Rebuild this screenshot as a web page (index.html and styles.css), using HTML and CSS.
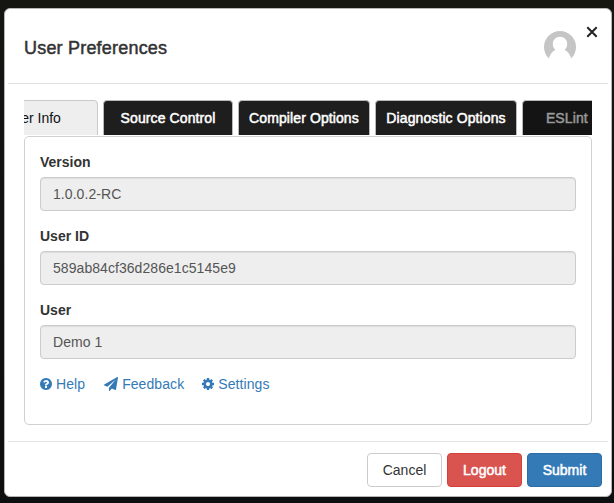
FILE: index.html
```html
<!DOCTYPE html>
<html lang="en">
<head>
<meta charset="utf-8">
<title>User Preferences</title>
<link rel="stylesheet" href="styles.css">
</head>
<body>
<div class="modal">
  <header class="modal-header">
    <h1 class="title">User Preferences</h1>
    <svg class="avatar" viewBox="0 0 32 32"><defs><clipPath id="round"><circle cx="16" cy="16" r="16"/></clipPath></defs><path clip-path="url(#round)" fill="#c5c5c5" d="M0 0h32v32H0z"/><circle cx="16" cy="13" r="7.300" fill="#fff"/><path fill="#fff" d="M11 19C7.500 21 6 24 4.500 28L3 33h26l-1.500-5C26 24 24.500 21 21 19z"/></svg>
    <button class="close" aria-label="Close"><svg viewBox="0 0 12 12"><path d="M1.300 1.300l9.400 9.400M10.700 1.300l-9.400 9.400"/></svg></button>
  </header>
  <main class="modal-body">
    <nav class="tabs">
      <a class="tab active">User Info</a>
      <a class="tab source">Source Control</a>
      <a class="tab compiler">Compiler Options</a>
      <a class="tab diagnostic">Diagnostic Options</a>
      <a class="tab disabled">ESLint Rules</a>
    </nav>
    <section class="panel">
      <label class="label">Version</label>
      <div class="field">1.0.0.2-RC</div>
      <label class="label">User ID</label>
      <div class="field">589ab84cf36d286e1c5145e9</div>
      <label class="label">User</label>
      <div class="field">Demo 1</div>
      <div class="links">
        <a class="link help"><svg viewBox="128 128 1536 1536"><path d="M1024 1376v-192q0-14-9-23t-23-9h-192q-14 0-23 9t-9 23v192q0 14 9 23t23 9h192q14 0 23-9t9-23zm256-672q0-88-55.500-163t-138.500-116-170-41q-243 0-371 213-15 24 8 42l132 100q7 6 19 6 16 0 25-12 53-68 86-92 34-24 86-24 48 0 85.500 26t37.500 59q0 38-20 61t-68 45q-63 28-115.500 86.500t-52.500 125.500v36q0 14 9 23t23 9h192q14 0 23-9t9-23q0-19 21.500-49.500t54.500-49.500q32-18 49-28.500t46-35 44.500-48 28-60.500 12.500-81zm384 192q0 209-103 385.500t-279.500 279.500-385.500 103-385.500-103-279.500-279.500-103-385.500 103-385.500 279.500-279.500 385.500-103 385.500 103 279.500 279.500 103 385.500z"/></svg><span>Help</span></a>
        <a class="link feedback"><svg viewBox="0 0 1792 1792"><path d="M1764 11q33 24 27 64l-256 1536q-5 29-32 45-14 8-31 8-11 0-24-5l-453-185-242 295q-18 23-49 23-13 0-22-4-19-7-30.500-23.500t-11.500-36.500v-349l864-1059-1069 925-395-162q-37-14-40-55-2-40 32-59l1664-960q15-9 32-9 20 0 36 11z"/></svg><span>Feedback</span></a>
        <a class="link settings"><svg viewBox="128 128 1536 1536"><path d="M1152 896q0-106-75-181t-181-75-181 75-75 181 75 181 181 75 181-75 75-181zm512-109v222q0 12-8 23t-20 13l-185 28q-19 54-39 91 35 50 107 138 10 12 10 25t-9 23q-27 37-99 108t-94 71q-12 0-26-9l-138-108q-44 23-91 38-16 136-29 186-7 28-36 28h-222q-14 0-24.500-8.500t-11.500-21.500l-28-184q-49-16-90-37l-141 107q-10 9-25 9-14 0-25-11-126-114-165-168-7-10-7-23 0-12 8-23 15-21 51-66.500t54-70.500q-27-50-41-99l-183-27q-13-2-21-12.500t-8-23.500v-222q0-12 8-23t19-13l186-28q14-46 39-92-40-57-107-138-10-12-10-24 0-10 9-23 26-36 98.500-107.500t94.500-71.500q13 0 26 10l138 107q44-23 91-38 16-136 29-186 7-28 36-28h222q14 0 24.500 8.500t11.500 21.500l28 184q49 16 90 37l142-107q9-9 24-9 13 0 25 10 129 119 165 170 7 8 7 22 0 12-8 23-15 21-51 66.500t-54 70.500q26 50 41 98l183 28q13 2 21 12.500t8 23.500z"/></svg><span>Settings</span></a>
      </div>
    </section>
  </main>
  <footer class="modal-footer">
    <button class="btn">Cancel</button>
    <button class="btn danger">Logout</button>
    <button class="btn primary">Submit</button>
  </footer>
</div>
</body>
</html>
```
FILE: styles.css
```css
* { box-sizing: border-box; }
body {
  margin: 0;
  height: 503px;
  padding: 8px 2px 6px 4px;
  overflow: hidden;
  background: linear-gradient(#151512, #0d0e0f);
  font: 14px/20px "Liberation Sans", Arial, sans-serif;
  color: #333;
}
.modal {
  height: 489px;
  padding: 0 3px;
  display: flex;
  flex-direction: column;
  background: #fff;
  border: 1px solid #b5b5b5;
  border-radius: 6px;
}
.modal-header {
  height: 75px;
  flex: none;
  display: flex;
  align-items: flex-start;
  padding: 0 10px 0 16px;
  border-bottom: 1px solid #e2e2e2;
}
.title {
  margin: 27px auto 0 0;
  font-size: 18px;
  line-height: 24px;
  font-weight: 400;
  letter-spacing: .2px;
  -webkit-text-stroke: .5px;
}
.avatar { width: 32px; height: 32px; margin-top: 22px; }
.close { width: 12px; height: 12px; margin: 17px 0 0 10px; padding: 0; border: 0; background: none; }
.close svg { display: block; width: 12px; height: 12px; fill: none; stroke: #222; stroke-width: 2; }
.modal-body { padding: 16px 16px 0; }
.tabs {
  display: flex;
  height: 35px;
  gap: 5px;
  overflow: hidden;
  justify-content: flex-start;
}
.tab {
  flex: none;
  height: 36px;
  padding-top: 7px;
  border: 1px solid #b7baba;
  border-radius: 4px 4px 0 0;
  background: #1e1e1e;
  color: #fff;
  text-align: center;
  white-space: nowrap;
  letter-spacing: .1px;
  -webkit-text-stroke: .5px;
}
.tab.active {
  width: 130px;
  margin-left: -56px;
  padding-right: 1px;
  background: #eee;
  border-color: #c9c9c9;
  color: #111;
  letter-spacing: 0;
  -webkit-text-stroke: 0;
}
.source { width: 130px; }
.compiler { width: 132px; }
.diagnostic { width: 142px; }
.tab.disabled { width: 130px; background: #141414; color: #999; }
.panel {
  height: 289px;
  margin-top: 1px;
  padding: 15px;
  border: 1px solid #d0d0d0;
  border-radius: 5px;
}
.label { display: block; height: 20px; margin-bottom: 5px; font-weight: 700; }
.field {
  height: 34px;
  margin-bottom: 15px;
  padding: 6px 12px;
  background: #eee;
  border: 1px solid #ccc;
  border-radius: 4px;
  box-shadow: inset 0 1px 1px rgba(0, 0, 0, .075);
  color: #555;
  letter-spacing: .06px;
}
.links { display: flex; }
.link { display: flex; align-items: center; gap: 4px; color: #337ab7; letter-spacing: .08px; }
.link svg { width: 12px; height: 12px; fill: currentColor; }
.feedback { margin-left: 19px; }
.feedback svg { width: 14px; height: 14px; }
.settings { margin-left: 18px; }
.modal-footer {
  height: 55px;
  margin-top: auto;
  flex: none;
  display: flex;
  justify-content: flex-end;
  gap: 5px;
  padding: 11px 6px 0;
  border-top: 1px solid #e2e2e2;
}
.btn {
  width: 75px;
  height: 34px;
  padding: 0;
  border: 1px solid #ccc;
  border-radius: 4px;
  background: #fff;
  color: #333;
  font: inherit;
}
.danger { background: #d9534f; border-color: #d43f3a; color: #fff; -webkit-text-stroke: .5px; }
.primary { background: #337ab7; border-color: #2e6da4; color: #fff; -webkit-text-stroke: .5px; }
```
